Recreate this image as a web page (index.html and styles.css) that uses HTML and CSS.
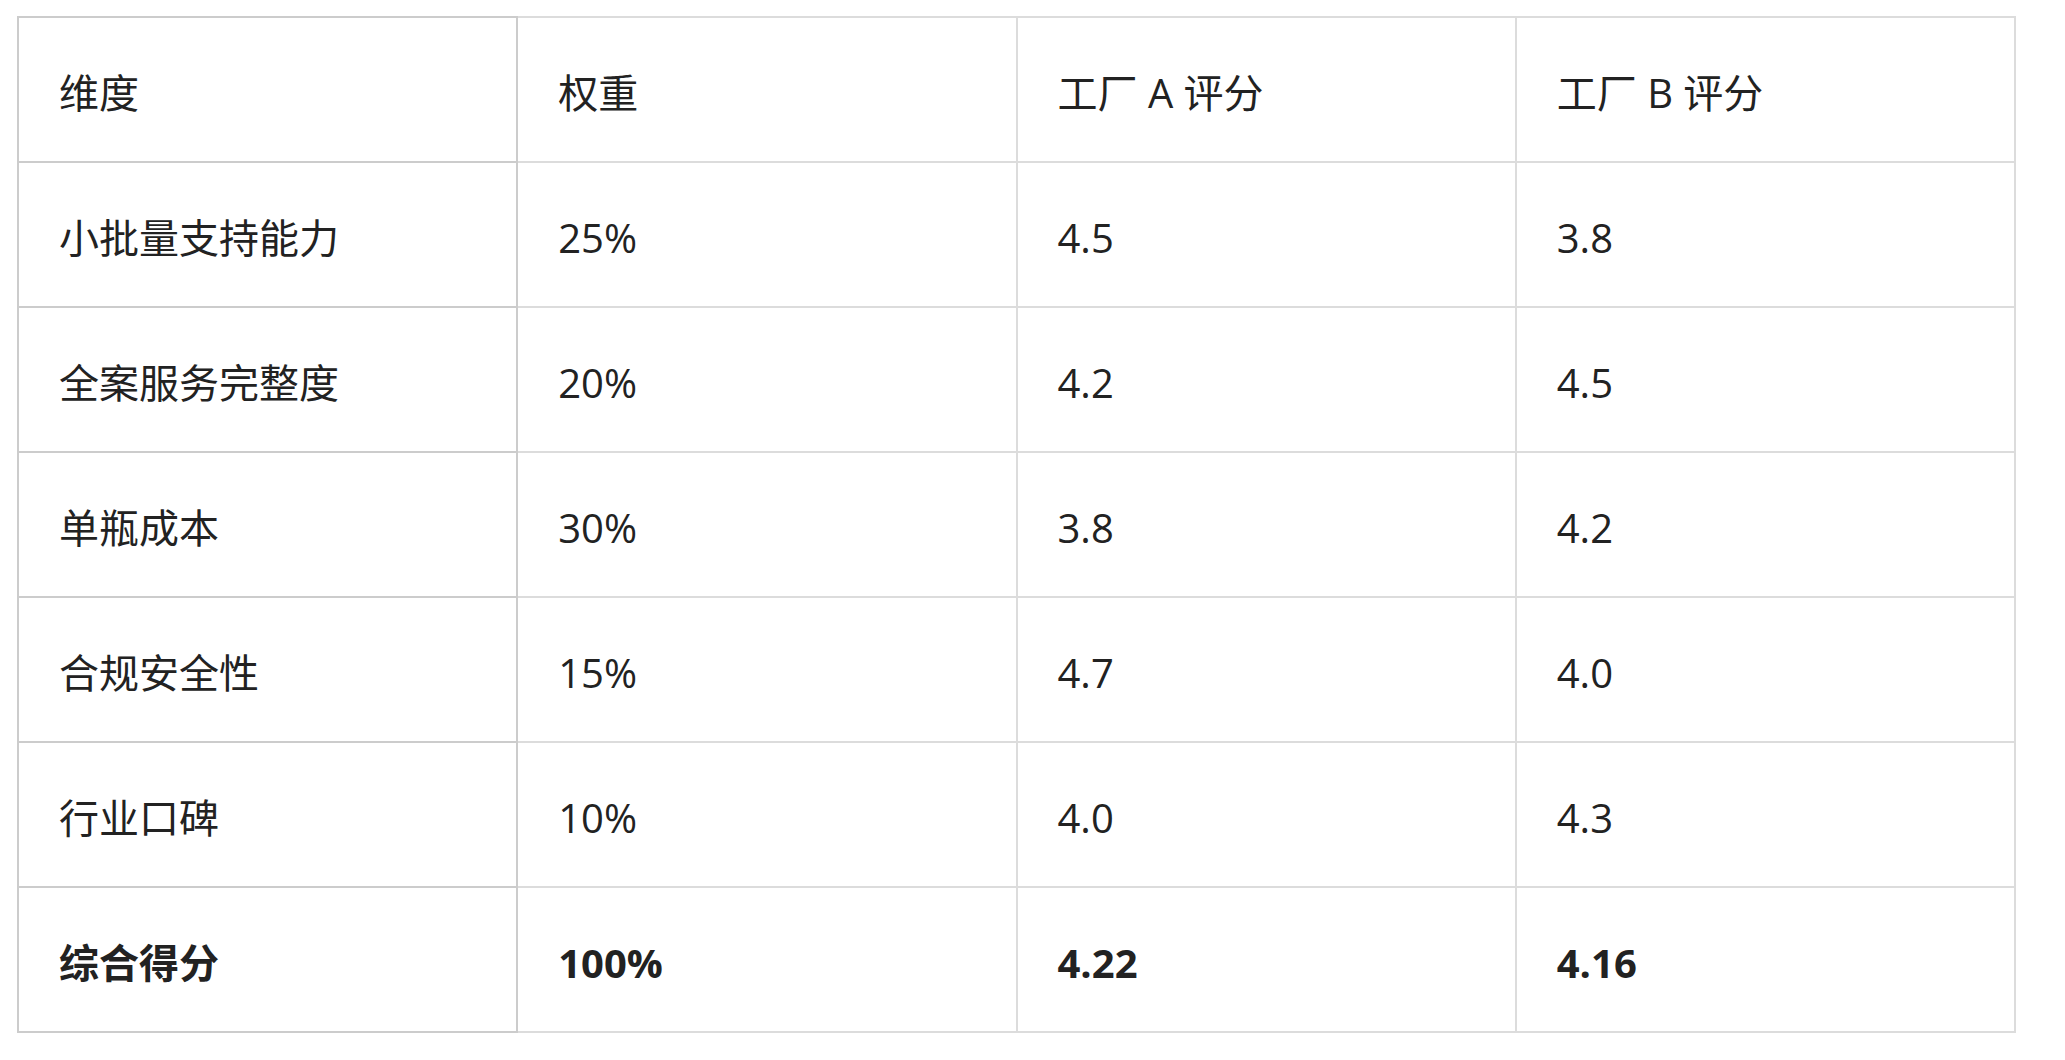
FILE: index.html
```html
<!DOCTYPE html>
<html lang="zh-CN">
<head>
<meta charset="utf-8">
<title>工厂评分对比</title>
<link rel="stylesheet" href="styles.css">
</head>
<body>
<div class="page">
  <table class="score-table">
    <thead>
      <tr><th>维度</th><th>权重</th><th>工厂 A 评分</th><th>工厂 B 评分</th></tr>
    </thead>
    <tbody>
      <tr><td>小批量支持能力</td><td>25%</td><td>4.5</td><td>3.8</td></tr>
      <tr><td>全案服务完整度</td><td>20%</td><td>4.2</td><td>4.5</td></tr>
      <tr><td>单瓶成本</td><td>30%</td><td>3.8</td><td>4.2</td></tr>
      <tr><td>合规安全性</td><td>15%</td><td>4.7</td><td>4.0</td></tr>
      <tr><td>行业口碑</td><td>10%</td><td>4.0</td><td>4.3</td></tr>
      <tr class="total"><td>综合得分</td><td>100%</td><td>4.22</td><td>4.16</td></tr>
    </tbody>
  </table>
</div>
</body>
</html>
```
FILE: styles.css
```css
html, body {
  margin: 0;
  padding: 0;
  background: #ffffff;
}
.page {
  padding: 16px 0 0 17px;
}
.score-table {
  width: 1999px;
  border-collapse: collapse;
  table-layout: fixed;
  font-family: "Open Sans", "Noto Sans CJK SC", sans-serif;
  font-size: 40px;
  color: #222222;
}
.score-table th,
.score-table td {
  border: 2px solid #dcdcdc;
  padding: 43px 40px 37px 40px;
  line-height: 63px;
  text-align: left;
  font-weight: 400;
  vertical-align: middle;
}
.score-table th:first-child,
.score-table td:first-child {
  border-color: #cccccc;
}
.score-table .total td {
  font-weight: 700;
}
```
